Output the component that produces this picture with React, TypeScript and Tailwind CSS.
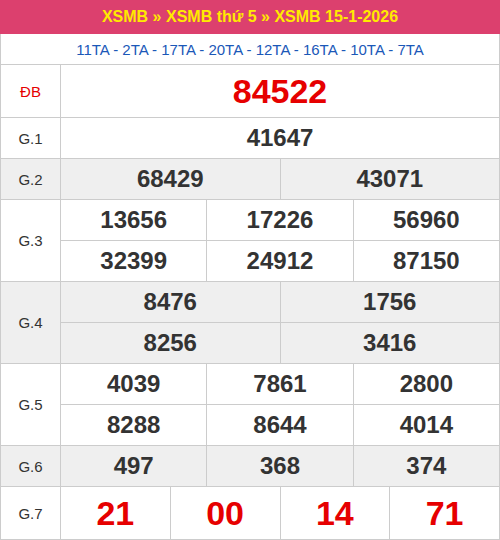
import React from 'react';

type Prize = {
  label: string;
  rows: string[][];
  shaded?: boolean;
  big?: boolean;
};

const prizes: Prize[] = [
  { label: 'ĐB', rows: [['84522']], big: true },
  { label: 'G.1', rows: [['41647']] },
  { label: 'G.2', rows: [['68429', '43071']], shaded: true },
  { label: 'G.3', rows: [['13656', '17226', '56960'], ['32399', '24912', '87150']] },
  { label: 'G.4', rows: [['8476', '1756'], ['8256', '3416']], shaded: true },
  { label: 'G.5', rows: [['4039', '7861', '2800'], ['8288', '8644', '4014']] },
  { label: 'G.6', rows: [['497', '368', '374']], shaded: true },
  { label: 'G.7', rows: [['21', '00', '14', '71']], big: true },
];

const colsClass: Record<number, string> = {
  1: 'grid-cols-1',
  2: 'grid-cols-2',
  3: 'grid-cols-3',
  4: 'grid-cols-4',
};

function PrizeRow({ prize }: { prize: Prize }) {
  const bg = prize.shaded ? 'bg-[#efefef]' : 'bg-white';
  const isDB = prize.label === 'ĐB';
  return (
    <div className={`flex ${bg}`}>
      <div
        className={`w-[60px] shrink-0 flex items-center justify-center border-r border-b border-[#ccc] text-[15px] ${
          isDB ? 'text-[#e60000]' : 'text-[#333]'
        }`}
      >
        {prize.label}
      </div>
      <div className="flex-1 flex flex-col">
        {prize.rows.map((row, i) => (
          <div key={i} className={`grid ${colsClass[row.length]}`}>
            {row.map((num, j) => (
              <div
                key={j}
                className={`flex items-center justify-center border-r border-b border-[#ccc] font-bold ${
                  prize.big
                    ? 'h-[53px] text-[34px] text-[#e60000]'
                    : 'h-[41px] text-[24px] text-[#333]'
                }`}
              >
                {num}
              </div>
            ))}
          </div>
        ))}
      </div>
    </div>
  );
}

export default function App() {
  return (
    <div className="w-[500px] h-[540px] bg-white font-['Liberation_Sans',Arial,sans-serif] leading-none">
      <div className="h-[34px] bg-[#dc406e] flex items-center justify-center text-[16px] font-bold text-[#ffea00]">
        XSMB » XSMB thứ 5 » XSMB 15-1-2026
      </div>
      <div className="border-l border-[#ccc]">
        <div className="h-[31px] flex items-center justify-center border-r border-b border-[#ccc] text-[15px] text-[#1b58b8]">
          11TA - 2TA - 17TA - 20TA - 12TA - 16TA - 10TA - 7TA
        </div>
        {prizes.map((p) => (
          <PrizeRow key={p.label} prize={p} />
        ))}
      </div>
    </div>
  );
}
